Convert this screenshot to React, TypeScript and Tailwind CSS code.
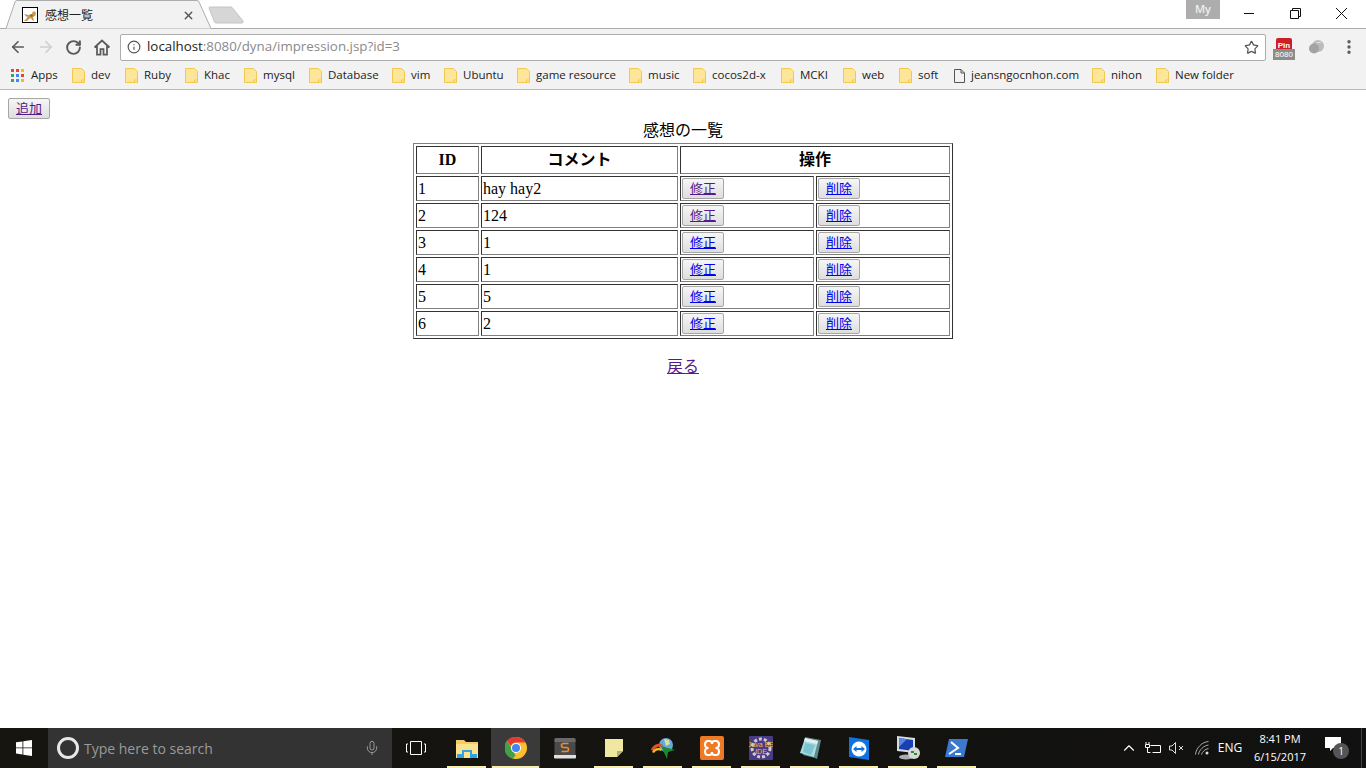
import { ArrowLeft, ArrowRight, RotateCw, Info, Star, X, EllipsisVertical, Mic, ChevronUp } from 'lucide-react'

const serif = "font-['Liberation_Serif','Noto_Sans_CJK_JP',serif]"

const bookmarks = [
  { label: 'dev', x: 'w-[53px]' },
  { label: 'Ruby', x: 'w-[60px]' },
  { label: 'Khac', x: 'w-[59px]' },
  { label: 'mysql', x: 'w-[65px]' },
  { label: 'Database', x: 'w-[83px]' },
  { label: 'vim', x: 'w-[52px]' },
  { label: 'Ubuntu', x: 'w-[73px]' },
  { label: 'game resource', x: 'w-[112px]' },
  { label: 'music', x: 'w-[64px]' },
  { label: 'cocos2d-x', x: 'w-[88px]' },
  { label: 'MCKI', x: 'w-[62px]' },
  { label: 'web', x: 'w-[56px]' },
  { label: 'soft', x: 'w-[55px]' },
]

const rows = [
  { id: '1', comment: 'hay hay2', visited: true },
  { id: '2', comment: '124', visited: true },
  { id: '3', comment: '1', visited: false },
  { id: '4', comment: '1', visited: false },
  { id: '5', comment: '5', visited: false },
  { id: '6', comment: '2', visited: false },
]

const Folder = () => (
  <svg width="13" height="15" viewBox="0 0 13 15" className="shrink-0">
    <path d="M.5.5h9l3 3v11H.5z" fill="#fde699" stroke="#f2c94c" />
    <path d="M9.5 12h3v2.500h-3z" fill="#fde699" stroke="#f2c94c" />
  </svg>
)

const AppsIcon = () => (
  <svg width="13" height="13" viewBox="0 0 13 13" className="shrink-0">
    <rect x="0" y="0" width="3" height="3" fill="#ea4335" />
    <rect x="5" y="0" width="3" height="3" fill="#ea4335" />
    <rect x="10" y="0" width="3" height="3" fill="#fbbc05" />
    <rect x="0" y="5" width="3" height="3" fill="#34a853" />
    <rect x="5" y="5" width="3" height="3" fill="#4285f4" />
    <rect x="10" y="5" width="3" height="3" fill="#ea4335" />
    <rect x="0" y="10" width="3" height="3" fill="#34a853" />
    <rect x="5" y="10" width="3" height="3" fill="#4285f4" />
    <rect x="10" y="10" width="3" height="3" fill="#fbbc05" />
  </svg>
)

const Favicon = () => (
  <svg width="16" height="16" viewBox="0 0 16 16" className="shrink-0">
    <rect x=".5" y=".5" width="15" height="15" fill="#fff" stroke="#000" />
    <path d="M2 7l4 1-1 2z" fill="#888" />
    <path d="M2 14l3-3 1-3 4-1 1-3 1 1 1-1 1 3-1 2-2 1 1 4-2-1-1-2-2 1-2 2z" fill="#c9994a" />
    <path d="M8 8l2-1 1 2-2 1z" fill="#8f6a2c" />
  </svg>
)

const Tab = () => (
  <div className="relative h-[29px] w-[211px] shrink-0">
    <svg width="211" height="29" viewBox="0 0 211 29" className="absolute inset-0">
      <path d="M0 28.500h6L15 2q.5-1.500 2-1.500h180q1.500 0 2 1.500l12 26.500" fill="#f2f2f2" stroke="#adadad" />
    </svg>
    <div className="relative flex h-full items-center pl-[22px] pt-px">
      <Favicon />
      <span className="ml-[7px] font-['Noto_Sans_CJK_JP',sans-serif] text-[12px] text-[#222]">感想一覧</span>
      <X size={13} strokeWidth={2.5} className="absolute left-[182px] top-[9px] text-[#555]" />
    </div>
  </div>
)

const TitleBar = () => (
  <div className="relative flex h-[29px] shrink-0 items-start bg-white">
    <div className="absolute inset-x-0 top-[28px] h-px bg-[#adadad]" />
    <Tab />
    <svg width="36" height="18" viewBox="0 0 36 18" className="-ml-[3px] mt-[6px] shrink-0">
      <path d="M1 2q0-1 1-1h21q1 0 1.500 1L35 15q.5 2-1 2H8q-1 0-1.500-1z" fill="#d6d6d6" stroke="#c4c4c4" />
    </svg>
    <div className="ml-auto mr-[2px] flex h-full items-start">
      <div className="mr-[6px] flex h-[19px] w-[34px] items-center justify-center bg-[#adadad] font-['Open_Sans',sans-serif] text-[11px] font-semibold text-[#eee]">My</div>
      <div className="flex h-[26px] w-[46px] items-center justify-center">
        <svg width="10" height="1" viewBox="0 0 10 1"><path d="M0 0h10v1H0z" fill="#111" /></svg>
      </div>
      <div className="flex h-[26px] w-[46px] items-center justify-center">
        <svg width="11" height="11" viewBox="0 0 11 11" fill="none" stroke="#111"><path d="M.5 2.500h8v8h-8zM2.500 2.500v-2h8v8h-2" /></svg>
      </div>
      <div className="flex h-[26px] w-[46px] items-center justify-center">
        <svg width="11" height="11" viewBox="0 0 11 11" fill="none" stroke="#111"><path d="M0 0l11 11M11 0L0 11" /></svg>
      </div>
    </div>
  </div>
)

const Toolbar = () => (
  <div className="flex h-[33px] shrink-0 items-center bg-[#f2f2f2] pt-[3px]">
    <ArrowLeft size={18} strokeWidth={2.25} className="ml-[9px] text-[#5a5a5a]" />
    <ArrowRight size={18} strokeWidth={2.25} className="ml-[10px] text-[#cfcfcf]" />
    <RotateCw size={17} strokeWidth={2.75} className="ml-[10px] text-[#5a5a5a]" />
    <svg width="18" height="18" viewBox="0 0 18 18" fill="none" stroke="#5a5a5a" strokeWidth="1.750" className="ml-[11px]">
      <path d="M1.500 9.500L9 2.500l7.500 7M4 8v8.500h3.500V11h3v5.500H14V8" />
    </svg>
    <div className="ml-[9px] flex h-[27px] w-[1146px] items-center rounded-[2px] border border-[#adadad] bg-white pl-[6px]">
      <Info size={14} strokeWidth={2} className="text-[#555]" />
      <span className="ml-[6px] font-['Open_Sans',sans-serif] text-[13.330px] text-[#222]">
        localhost<span className="text-[#8a8a8a]">:8080/dyna/impression.jsp?id=3</span>
      </span>
      <Star size={15} strokeWidth={2} className="ml-auto mr-[6px] text-[#555]" />
    </div>
    <div className="relative ml-[7px] h-[26px] w-[22px]">
      <div className="absolute left-[3px] top-[4px] h-[14px] w-[16px] rounded-[2px] bg-[#cc1f27] text-center font-['Liberation_Sans',sans-serif] text-[8px] font-bold leading-[16px] text-white">Pin</div>
      <div className="absolute left-0 top-[15px] h-[11px] w-[22px] bg-[#8c8c8c] text-center font-['Liberation_Sans',sans-serif] text-[8px] leading-[11px] text-white">8080</div>
    </div>
    <svg width="17" height="15" viewBox="0 0 17 15" className="ml-[13px]">
      <circle cx="10" cy="6" r="6" fill="#bcbcbc" />
      <circle cx="6" cy="8.500" r="5" fill="#a3a3a3" />
      <path d="M8 3a4 3 0 0 1 6 0z" fill="#e4e4e4" />
    </svg>
    <EllipsisVertical size={18} strokeWidth={2.5} className="ml-[15px] text-[#5a5a5a]" />
  </div>
)

const BookmarkBar = () => (
  <div className="flex h-[28px] shrink-0 items-center border-b border-[#b8b8b8] bg-[#f2f2f2] pl-[11px] font-['Open_Sans',sans-serif] text-[11.500px] text-[#222]">
    <div className="flex w-[61px] items-center gap-[7px]"><AppsIcon /><span className="pb-[2px]">Apps</span></div>
    {bookmarks.map((b) => (
      <div key={b.label} className={`flex items-center gap-[6px] ${b.x}`}>
        <Folder />
        <span className="whitespace-nowrap pb-[2px]">{b.label}</span>
      </div>
    ))}
    <div className="flex w-[138px] items-center gap-[6px]">
      <svg width="11" height="14" viewBox="0 0 11 14" fill="none" stroke="#555" className="shrink-0"><path d="M.5.500h6.500l3.500 3.500v9.500H.5zM7 .500V4h3.500" /></svg>
      <span className="whitespace-nowrap pb-[2px]">jeansngocnhon.com</span>
    </div>
    <div className="flex w-[64px] items-center gap-[6px]"><Folder /><span className="pb-[2px]">nihon</span></div>
    <div className="flex items-center gap-[6px]"><Folder /><span className="pb-[2px]">New folder</span></div>
  </div>
)

const LinkButton = ({ label, visited }: { label: string; visited: boolean }) => (
  <span className="flex h-[21px] w-[42px] items-center justify-center rounded-[2px] border border-[#a6a6a6] bg-gradient-to-b from-[#f6f6f6] to-[#dedede] text-[13px]">
    <a href="#" className={`underline ${visited ? 'text-[#551a8b]' : 'text-[#0000ee]'}`}>{label}</a>
  </span>
)

const Cell = ({ children, className = '' }: { children: React.ReactNode; className?: string }) => (
  <td className={`border border-b-[#808080] border-l-[#333] border-r-[#808080] border-t-[#333] p-px ${className}`}>{children}</td>
)

const ImpressionPage = () => (
  <div className={`min-h-0 flex-1 bg-white pl-[8px] pt-[8px] pr-[8px] text-[16px] text-black ${serif}`}>
    <LinkButton label="追加" visited />
    <table className="mx-auto mt-[2px] w-[540px] table-fixed border-separate border-spacing-[2px] border border-b-[#333] border-l-[#808080] border-r-[#333] border-t-[#808080] leading-[18px]">
      <caption className="h-[22px] pt-px text-center leading-[18px]">感想の一覧</caption>
      <colgroup>
        <col className="w-[63px]" />
        <col className="w-[197px]" />
        <col className="w-[134px]" />
        <col className="w-[134px]" />
      </colgroup>
      <thead>
        <tr className="h-[28px]">
          <th className="border border-b-[#808080] border-l-[#333] border-r-[#808080] border-t-[#333] p-px text-[16px] font-bold">ID</th>
          <th className="border border-b-[#808080] border-l-[#333] border-r-[#808080] border-t-[#333] p-px text-[16px] font-bold">コメント</th>
          <th colSpan={2} className="border border-b-[#808080] border-l-[#333] border-r-[#808080] border-t-[#333] p-px text-[16px] font-bold">操作</th>
        </tr>
      </thead>
      <tbody>
        {rows.map((r) => (
          <tr key={r.id} className="h-[25px]">
            <Cell>{r.id}</Cell>
            <Cell>{r.comment}</Cell>
            <Cell><LinkButton label="修正" visited={r.visited} /></Cell>
            <Cell><LinkButton label="削除" visited={false} /></Cell>
          </tr>
        ))}
      </tbody>
    </table>
    <p className="mt-[17px] text-center leading-[22px]"><a href="#" className="text-[#551a8b] underline">戻る</a></p>
  </div>
)

const ChromeLogo = () => (
  <svg width="22" height="22" viewBox="0 0 22 22">
    <circle cx="11" cy="11" r="11" fill="#fbc02d" />
    <path d="M11 0a11 11 0 0 1 9.500 5.500H11A5.500 5.500 0 0 0 5.800 9.300L2 3.500A11 11 0 0 1 11 0z" fill="#e53935" />
    <path d="M2 3.500l4.500 8 4 7L7.800 21.500A11 11 0 0 1 2 3.500z" fill="#43a047" />
    <circle cx="11" cy="11" r="5" fill="#fff" />
    <circle cx="11" cy="11" r="4" fill="#4285f4" />
  </svg>
)

const taskItems = [
  {
    key: 'explorer', running: true,
    icon: (
      <svg width="22" height="19" viewBox="0 0 22 19">
        <path d="M0 1h8l2 2h12v16H0z" fill="#f3cc6a" />
        <path d="M0 5h22v14H0z" fill="#fde28f" />
        <path d="M1 15h5v-4h10v4h5v4H1z" fill="#2fa4e0" />
        <path d="M8 13h6v6H8z" fill="#fde28f" />
      </svg>
    ),
  },
  { key: 'chrome', running: true, active: true, icon: <ChromeLogo /> },
  {
    key: 'sublime', running: false,
    icon: (
      <svg width="24" height="21" viewBox="0 0 24 21">
        <path d="M3 0h18q1.500 0 1.500 1.500V17h-21V1.500Q1.500 0 3 0z" fill="#4a4a4a" />
        <path d="M3 0h18q1.500 0 1.500 1.500V4h-21V1.500Q1.500 0 3 0z" fill="#6a6a6a" />
        <path d="M1 17h22v2.500q0 1-1 1H2q-1 0-1-1z" fill="#e0e0e0" />
        <path d="M15.500 5.500h-5q-2 0-2 2t2 2h3q2 0 2 2t-2 2h-5" fill="none" stroke="#f28b28" strokeWidth="1.600" />
      </svg>
    ),
  },
  {
    key: 'notes', running: true,
    icon: (
      <svg width="18" height="18" viewBox="0 0 18 18">
        <path d="M0 0h18v12l-6 6H0z" fill="#f0e8a0" />
        <path d="M18 12h-6v6z" fill="#b8b070" />
      </svg>
    ),
  },
  {
    key: 'idm', running: true,
    icon: (
      <svg width="24" height="22" viewBox="0 0 24 22">
        <circle cx="15" cy="8" r="7" fill="#6aa6dc" />
        <path d="M13 2l5 1 1 4-4 2z" fill="#cfe3a0" />
        <path d="M0 13a8 8 0 0 1 12-5l-1 2a6 6 0 0 0-8 4z" fill="#e2502b" />
        <path d="M1 15a7 7 0 0 1 10-3l-1 2a5 5 0 0 0-7 2z" fill="#f0c020" />
        <path d="M10 9l14 4-7 2-1 7z" fill="#1a8a2e" />
      </svg>
    ),
  },
  {
    key: 'xampp', running: true,
    icon: (
      <svg width="24" height="24" viewBox="0 0 24 24">
        <rect width="24" height="24" rx="2" fill="#ee7a26" />
        <path d="M8 5h1.500q2.500 0 2.500 3 0-3 2.500-3H16q3 0 3 3.500T15.500 12q3.500 0 3.500 3.500T16 19h-1.500Q12 19 12 16q0 3-2.500 3H8q-3 0-3-3.500T8.500 12Q5 12 5 8.500T8 5z" fill="none" stroke="#fff" strokeWidth="2" />
      </svg>
    ),
  },
  {
    key: 'eclipse', running: true,
    icon: (
      <svg width="24" height="24" viewBox="0 0 24 24">
        <rect width="24" height="24" rx="1" fill="#4b3a86" />
        <circle cx="12" cy="12" r="9" fill="none" stroke="#ccc" strokeWidth="3" strokeDasharray="3 2" />
        <text x="12" y="11" textAnchor="middle" fontSize="7" fill="#f0c040" fontFamily="Liberation Sans">Java EE</text>
        <text x="12" y="18" textAnchor="middle" fontSize="7" fill="#f0c040" fontFamily="Liberation Sans">IDE</text>
      </svg>
    ),
  },
  {
    key: 'book', running: true,
    icon: (
      <svg width="22" height="22" viewBox="0 0 22 22">
        <path d="M6 0l16 3-4 19-2-1L4 18z" fill="#5f8a8a" />
        <path d="M6 1l13 3-4 16L1 16z" fill="#a8dbe4" />
        <path d="M6 1l13 3-1 3L5 4z" fill="#e8eeee" />
        <path d="M6 6l10 2-4 10-8-3z" fill="#7cc4cf" />
      </svg>
    ),
  },
  {
    key: 'teamviewer', running: true,
    icon: (
      <svg width="21" height="23" viewBox="0 0 21 23">
        <path d="M1 0l20 3v20L1 20z" fill="#0e73e0" />
        <circle cx="11" cy="12" r="7.500" fill="#fff" />
        <path d="M5 12l3.500-3v2h5V9l3.500 3-3.500 3v-2h-5v2z" fill="#0e73e0" />
      </svg>
    ),
  },
  {
    key: 'network', running: true,
    icon: (
      <svg width="24" height="24" viewBox="0 0 24 24">
        <path d="M1 0l18 2v15L1 15z" fill="#d8dde2" />
        <path d="M3 2l14 2v11L3 13z" fill="#1a3fb0" />
        <path d="M3 2l8 1-8 8z" fill="#5e86e0" />
        <ellipse cx="10" cy="21" rx="7" ry="2.500" fill="#a9adb2" />
        <circle cx="18" cy="17" r="6" fill="#d5d8d5" />
        <path d="M15 16l3 0M18 18h3" stroke="#2d8a3a" strokeWidth="2" />
      </svg>
    ),
  },
  {
    key: 'powershell', running: true,
    icon: (
      <svg width="23" height="18" viewBox="0 0 23 18">
        <path d="M4 0h19l-4 18H0z" fill="#3b78d0" />
        <path d="M6 3l7 6-9 6" fill="none" stroke="#fff" strokeWidth="2" />
        <path d="M10 15h6" stroke="#fff" strokeWidth="2" />
      </svg>
    ),
  },
]

const Taskbar = () => (
  <div className="flex h-[40px] shrink-0 items-stretch bg-gradient-to-r from-[#17150f] via-[#14130f] to-[#111] text-white">
    <div className="flex w-[48px] items-center justify-center">
      <svg width="16" height="16" viewBox="0 0 16 16" fill="#fff">
        <path d="M0 2.300l6.500-.9v6.100H0zM7.300 1.300L16 0v7.500H7.300zM0 8.300h6.500v6.200L0 13.600zM7.300 8.300H16V16l-8.700-1.200z" />
      </svg>
    </div>
    <div className="flex w-[344px] items-center bg-[#333] pl-[9px]">
      <div className="h-[22px] w-[22px] rounded-full border-[3px] border-[#e8e8e8]" />
      <span className="ml-[5px] font-['Open_Sans',sans-serif] text-[14px] text-[#9a9a9a]">Type here to search</span>
      <Mic size={16} strokeWidth={1.25} className="ml-auto mr-[12px] text-[#aaa]" />
    </div>
    <div className="flex w-[50px] items-center justify-center pr-[2px]">
      <svg width="20" height="14" viewBox="0 0 20 14" fill="none" stroke="#fff"><path d="M4.500.500h11v13h-11zM2 3H.5v8H2M18 3h1.500v8H18" /></svg>
    </div>
    <div className="flex">
      {taskItems.map((item) => (
        <div
          key={item.key}
          className={`relative flex w-[49px] items-center justify-center ${item.active ? 'bg-[#3a3a3a]' : ''}`}
        >
          {item.icon}
          {item.running && <div className={`absolute bottom-0 h-[2px] bg-[#f5eeb0] ${item.active ? 'inset-x-px' : 'inset-x-[5px]'}`} />}
        </div>
      ))}
    </div>
    <div className="ml-auto flex items-center font-['Open_Sans',sans-serif]">
      <div className="flex w-[24px] justify-center"><ChevronUp size={18} strokeWidth={1.5} /></div>
      <div className="flex w-[23px] justify-center">
        <svg width="16" height="12" viewBox="0 0 16 12" fill="none" stroke="#fff"><path d="M5.500 3.500h10v7h-8M1 0v2M4 0v2M.5 2.500h4v3h-4zM2.500 5.500v5h3" /></svg>
      </div>
      <div className="flex w-[24px] justify-center">
        <svg width="15" height="12" viewBox="0 0 15 12" fill="none" stroke="#ddd"><path d="M.5 4h2.500L6.500.5v11L3 8H.5zM10 4l4 4M14 4l-4 4" /></svg>
      </div>
      <div className="flex w-[28px] justify-center">
        <svg width="14" height="14" viewBox="0 0 14 14" fill="none" stroke="#aaa"><path d="M.5 13.500C1 7 7 1 13.500.5M3.500 13.500C4 9 9 4.500 13.500 4M6.500 13.500C7 11 10 8 13.500 7.500" /><circle cx="12" cy="12" r="1.500" fill="#ddd" stroke="none" /></svg>
      </div>
      <div className="w-[28px] text-center text-[12px]">ENG</div>
      <div className="w-[72px] text-center text-[11px] leading-[18px]">
        <div>8:41 PM</div>
        <div>6/15/2017</div>
      </div>
      <div className="relative h-[24px] w-[45px]">
        <svg width="16" height="15" viewBox="0 0 16 15" fill="#fff" className="absolute left-[9px] top-[1px]"><path d="M0 0h16v11H8l-3 3v-3H0z" /></svg>
        <div className="absolute left-[17px] top-[7px] flex h-[16px] w-[16px] items-center justify-center rounded-full bg-[#555] text-[10px]">1</div>
      </div>
      <div className="h-full w-[5px] border-l border-[#444]" />
    </div>
  </div>
)

export default function App() {
  return (
    <div className="flex h-screen w-full flex-col overflow-hidden bg-white">
      <TitleBar />
      <Toolbar />
      <BookmarkBar />
      <ImpressionPage />
      <Taskbar />
    </div>
  )
}
